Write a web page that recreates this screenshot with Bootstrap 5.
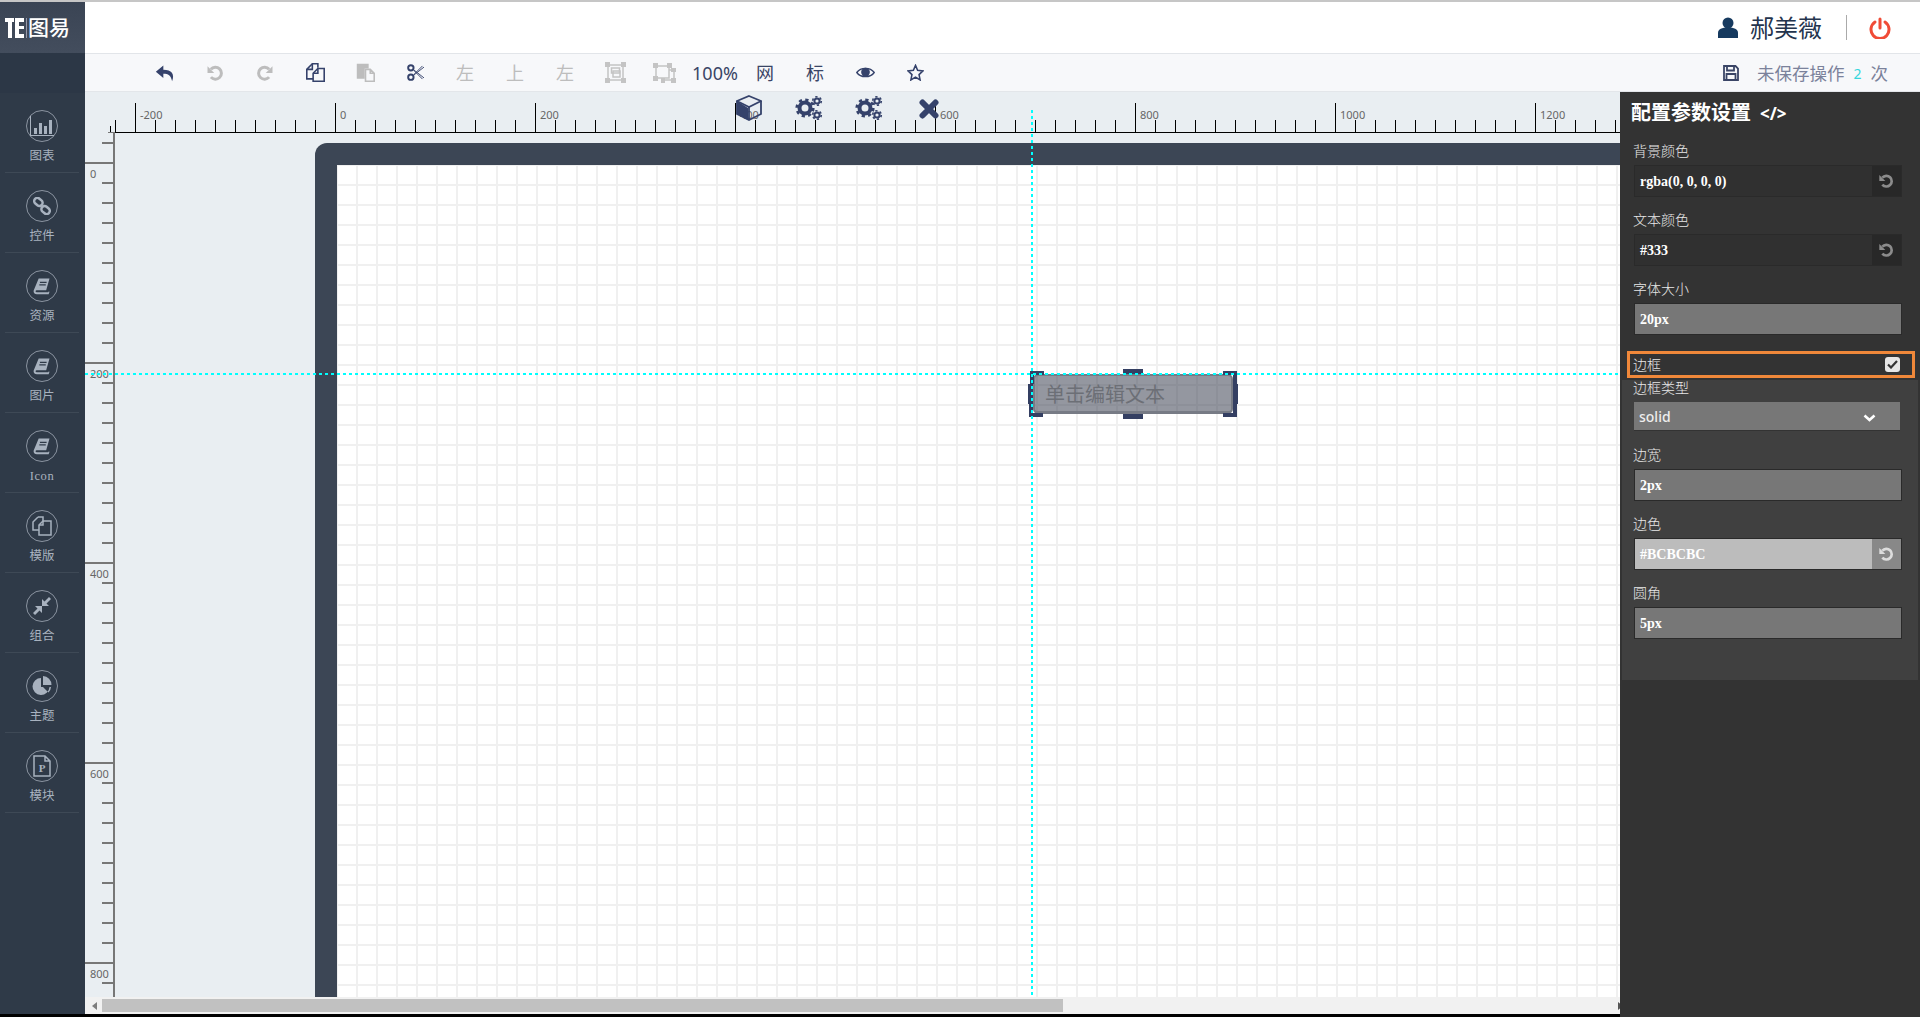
<!DOCTYPE html>
<html lang="zh"><head><meta charset="utf-8"><title>图易</title>
<link rel="stylesheet" href="https://cdn.jsdelivr.net/npm/bootstrap@5.3.0/dist/css/bootstrap.min.css">
<style>
html,body{height:1017px;overflow:hidden;margin:0}
body{background:#000;font-family:"Noto Sans","Noto Sans CJK SC",sans-serif;color:#333}
svg{display:block}
.topline{height:2px;background:#c6c6c6}
.shell{height:1012px;position:relative}
.side{width:85px;background:#2f3a48}
.logo-box{height:51px;background:linear-gradient(#3a4454,#434d5d);color:#fff;font-size:21px;padding-left:5px;font-weight:500}
.logo-bar{width:1px;height:20px;background:#99a;margin:0 1px 0 2px}
.side-gap{height:40px;background:#2c3746}
.nav-cell{height:80px;padding-top:17px;margin:0 6px 0 5px;border-bottom:1px solid #3e4956;color:#a8b2bf;font-size:12.5px;line-height:20px}
.nav-ring{width:32px;height:32px;border:1px solid #8b94a1;border-radius:50%;margin-bottom:4px}
.nav-latin{font-family:"Liberation Serif",serif;letter-spacing:.6px}
.head-row{height:52px;background:#fff;border-bottom:1px solid #e2e5e9}
.user-name{font-size:24px;color:#24344d;line-height:1}
.head-split{width:1px;height:25px;background:#aaa;margin:0 22px 0 24px}
.tool-row{height:38px;background:#f7f8fa;border-bottom:1px solid #e3e6ea;padding-left:55px}
.tool-cell{width:50px;font-size:18px;color:#3a4566;line-height:1}
.tool-cell.off{color:#bdbdbd}
.save-note{color:#7b829b;font-size:17.5px;padding-right:32px;line-height:1}
.save-text{padding-top:2px}
.save-num{color:#35d6dc;font-size:14px;margin:2px 9px 0}
.stage{height:905px;background:#e9eef2;position:relative;overflow:hidden}
.h-ruler{position:absolute;left:25px;top:10px;width:1600px;height:31px;background:
 linear-gradient(#000,#000) 0 bottom/100% 1px no-repeat,
 linear-gradient(90deg,#000 1px,transparent 1px) 25px bottom/200px 30px repeat-x,
 linear-gradient(90deg,#000 1px,transparent 1px) 5px bottom/20px 13px repeat-x,
 linear-gradient(90deg,#000 1px,transparent 1px) 0 bottom/20px 7px no-repeat}
.h-labels{padding:5px 0 0 25px;font-size:11px;color:#666;line-height:16px}
.h-labels span{width:200px;padding-left:5px;flex:none}
.v-ruler{position:absolute;left:0;top:40px;width:30px;height:865px;background:
 linear-gradient(#777,#777) 28px 0/2px 100% no-repeat,
 linear-gradient(#777 2px,transparent 2px) 0 30px/30px 200px repeat-y,
 linear-gradient(#777 2px,transparent 2px) 17px 10px/12px 20px repeat-y,
 linear-gradient(#777,#777) 23px 0/6px 1px no-repeat}
.v-labels{position:absolute;left:5px;top:74px;font-size:11px;color:#666;line-height:16px}
.v-labels span{display:block;height:200px}
.frame{position:absolute;left:230px;top:51px;width:1700px;height:900px;background:#3c4655;border-top-left-radius:12px;padding:22px 0 0 22px}
.sheet{height:100%;background:linear-gradient(90deg,#f0f0f0 2px,transparent 2px) 19px 0/20px 20px,linear-gradient(#f0f0f0 2px,transparent 2px) 0 19px/20px 20px,#fff}
.guide-v{position:absolute;left:946px;top:18px;width:2px;height:890px;background:repeating-linear-gradient(#0ff 0 3px,transparent 3px 6px)}
.guide-h{position:absolute;left:0;top:281px;width:1540px;height:2px;background:repeating-linear-gradient(90deg,#0ff 0 3px,transparent 3px 6px)}
.picked{position:absolute;left:948px;top:282px;width:200px;height:40px;background:rgba(60,66,82,.55);border:2px solid #777b85;border-bottom-width:3px;border-radius:5px;color:#6c6f76;font-size:20px;line-height:1;padding:3px 0 0 10px}
.grip{position:absolute;background:#343f62}
.grip-n{left:88px;top:-7px;width:20px;height:5px}
.grip-s{left:88px;top:38px;width:20px;height:5px}
.grip-w{left:-7px;top:8px;width:5px;height:20px}
.grip-e{right:-7px;top:8px;width:5px;height:20px}
.corner{position:absolute;width:14px;height:13px;border:0 solid #343f62}
.c-tl{left:-5px;top:-5px;border-width:4px 0 0 4px}
.c-tr{right:-6px;top:-5px;border-width:4px 4px 0 0}
.c-bl{left:-6px;bottom:-6px;border-width:0 0 4px 4px}
.c-br{right:-6px;bottom:-6px;border-width:0 4px 4px 0}
.float-tools{position:absolute;left:634px;top:3px;z-index:2}
.float-tools div{width:60px}
.scroll-row{height:17px;background:#f1f1f1;padding-left:7px}
.scroll-thumb{width:961px;height:13px;background:#c1c1c1}
.arrow-l{width:0;height:0;border:4px solid transparent;border-right:5px solid #7d7d7d;border-left:0;margin-right:5px}
.arrow-r{width:0;height:0;border:4px solid transparent;border-left:5px solid #555;border-right:0;margin:0 297px 0 auto}
.panel{position:absolute;right:0;top:90px;width:300px;height:925px;background:#333;color:#e8e8e8;z-index:3}
.panel-title{font:700 20px/24px "Liberation Serif","Noto Sans CJK SC",serif;color:#fff;padding:9px 0 0 11px;height:49px}
.title-code{font:700 17px/24px "Noto Sans",sans-serif;margin-left:9px}
.field{padding:0 18px 0 14px;margin-bottom:13px}
.field-label{font-size:14px;line-height:20px;margin:0 0 4px -1px;color:#e8e8e8;font-weight:300}
.val{font:700 14px/32px "Liberation Serif",serif;height:32px;padding:0 0 0 5px;border:1px solid #2a2a2a;border-radius:0;color:#fff;background:#777;flex:1}
.input-group .val{border-right:0}
.val-dark{background:#303030}
.val-light{background:#bcbcbc}
.undo-dark{width:31px;height:32px;background:#282828;border:1px solid #2a2a2a;border-left:0;border-radius:0;padding:0}
.undo-light{background:#888}
.border-row{margin:16px 5px 2px 7px;height:27px;border:3px solid #f0883a;padding:0 12px 0 3px;font-size:14px;font-weight:300}
.tick-box{width:15px;height:15px;background:#e6e6e6;border-radius:3px}
.group-box{margin:0 2px;height:300px;background:#404040}
.group-box .field{padding:0 16px 0 12px}
.first-label{line-height:16px;margin-bottom:6px}
.select-box{height:29px;background:#777;color:#eee;font-size:14px;line-height:28px;padding:1px 24px 0 5px;font-weight:500;border-bottom:1px solid #333;width:266px}
.select-chev{margin-top:3px}
</style></head>
<body>
<svg width="0" height="0" class="position-absolute"><defs>
<symbol id="gears" viewBox="0 0 28 26"><g fill="none" stroke="#35426b"><circle cx="10" cy="13" r="5.500" stroke-width="4"/><circle cx="10" cy="13" r="8.300" stroke-width="2.600" stroke-dasharray="3.26 3.26"/><circle cx="22" cy="6" r="2.600" stroke-width="2"/><circle cx="22" cy="6" r="4.300" stroke-width="1.600" stroke-dasharray="2.250 2.250"/><circle cx="22" cy="20" r="2.600" stroke-width="2"/><circle cx="22" cy="20" r="4.300" stroke-width="1.600" stroke-dasharray="2.250 2.250"/></g></symbol>
<symbol id="book" viewBox="0 0 24 24"><path fill="#a8b2bf" d="M8 3H21L17 17H5.500C4.500 17 4 18 4.500 18.800 5 19.500 6 19.500 6.500 19.500H19.500L20 18.500 21 19 20 22H6C3 22 1.500 20 2 17.500ZM9.500 7V8.500H17.500V7ZM8.800 10V11.500H16.500V10Z"/></symbol>
<symbol id="undo" viewBox="0 0 24 24"><path fill="none" stroke="currentColor" stroke-width="4" d="M6.500 7A8 8 0 1 1 6.500 17.500"/><path fill="currentColor" d="M2 3V12H11Z"/></symbol>
</defs></svg>
<div class="topline"></div>
<div class="shell d-flex">
 <aside class="side flex-shrink-0">
  <div class="logo-box d-flex align-items-center">
   <svg width="19" height="20" viewBox="0 0 19 20"><path fill="#fff" d="M0 0H9V4H7V20H3V4H0ZM10 0H19V4H14V8H19V11H14V16H19V20H10Z"/></svg>
   <span class="logo-bar"></span><span>图易</span>
  </div>
  <div class="side-gap"></div>
  <div class="nav-cell text-center"><div class="nav-ring d-flex align-items-center justify-content-center mx-auto"><svg width="26" height="22" viewBox="0 0 26 22"><path fill="#a8b2bf" d="M1 1H2V20H25V21H1ZM5 13H8V19H5ZM10 8H13V19H10ZM15 11H18V19H15ZM20 5H23V19H20Z"/></svg></div>图表</div>
  <div class="nav-cell text-center"><div class="nav-ring d-flex align-items-center justify-content-center mx-auto"><svg width="18" height="18" viewBox="0 0 20 20"><g fill="none" stroke="#a8b2bf" stroke-width="2.800"><rect x="1" y="2" width="10" height="7" rx="3.500" transform="rotate(40 6 5.500)"/><rect x="9" y="11" width="10" height="7" rx="3.500" transform="rotate(40 14 14.500)"/></g></svg></div>控件</div>
  <div class="nav-cell text-center"><div class="nav-ring d-flex align-items-center justify-content-center mx-auto"><svg width="20" height="20"><use href="#book"/></svg></div>资源</div>
  <div class="nav-cell text-center"><div class="nav-ring d-flex align-items-center justify-content-center mx-auto"><svg width="20" height="20"><use href="#book"/></svg></div>图片</div>
  <div class="nav-cell text-center"><div class="nav-ring d-flex align-items-center justify-content-center mx-auto"><svg width="20" height="20"><use href="#book"/></svg></div><span class="nav-latin">Icon</span></div>
  <div class="nav-cell text-center"><div class="nav-ring d-flex align-items-center justify-content-center mx-auto"><svg width="20" height="20" viewBox="0 0 20 20"><g fill="none" stroke="#a8b2bf" stroke-width="1.500"><path d="M6 1H11V6M6 1L1 6V14H7"/><path d="M11 5H19V19H7V9Z"/><path d="M7 9H11V5"/></g></svg></div>模版</div>
  <div class="nav-cell text-center"><div class="nav-ring d-flex align-items-center justify-content-center mx-auto"><svg width="18" height="18" viewBox="0 0 18 18"><path fill="#a8b2bf" d="M16 0L18 2 13.500 6.500 16 9H9V2L11.500 4.500ZM2 18L0 16 4.500 11.500 2 9H9V16L6.500 13.500Z"/></svg></div>组合</div>
  <div class="nav-cell text-center"><div class="nav-ring d-flex align-items-center justify-content-center mx-auto"><svg width="20" height="20" viewBox="0 0 20 20"><path fill="#a8b2bf" d="M9 2A8.500 8.500 0 1 0 17.500 11H9ZM11 0V9H19.500A9 9 0 0 0 11 0ZM11 11H19A8 8 0 0 1 16.500 16.500Z"/></svg></div>主题</div>
  <div class="nav-cell text-center"><div class="nav-ring d-flex align-items-center justify-content-center mx-auto"><svg width="20" height="22" viewBox="0 0 20 22"><path fill="none" stroke="#a8b2bf" stroke-width="1.500" d="M2 1H13L18 6V21H2ZM13 1V6H18"/><text x="10" y="17" text-anchor="middle" font-family="Liberation Serif" font-weight="700" font-size="11" fill="#a8b2bf">P</text></svg></div>模块</div>
 </aside>
 <main class="flex-grow-1 d-flex flex-column" style="min-width:0">
  <div class="head-row d-flex align-items-center justify-content-end">
   <svg width="20" height="21" viewBox="0 0 20 21" class="me-2"><circle cx="10" cy="6" r="5.500" fill="#163a5f"/><path fill="#163a5f" d="M0 21V16C0 12 4 10.500 10 10.500S20 12 20 16V21Z"/></svg>
   <span class="user-name ms-1">郝美薇</span><span class="head-split"></span>
   <svg width="22" height="22" viewBox="0 0 22 22" class="me-4"><g fill="none" stroke="#f04b37" stroke-width="3" stroke-linecap="round"><path d="M6 5A9 9 0 1 0 16 5"/><path d="M11 2V11"/></g></svg><span style="width:5px"></span>
  </div>
  <div class="tool-row d-flex align-items-center">
   <div class="tool-cell d-flex justify-content-center"><svg width="20" height="20" viewBox="0 0 24 24"><path fill="#35426b" d="M10 3L1 10.500 10 18V13C16 13 19 14.500 20.500 22 24 13 20 8 10 8Z"/></svg></div>
   <div class="tool-cell off d-flex justify-content-center"><svg width="18" height="18"><use href="#undo"/></svg></div>
   <div class="tool-cell off d-flex justify-content-center"><svg width="18" height="18" style="transform:scaleX(-1)"><use href="#undo"/></svg></div>
   <div class="tool-cell d-flex justify-content-center"><svg width="19" height="19" viewBox="0 0 24 24"><g fill="none" stroke="#35426b" stroke-width="2"><path d="M15 6V1H8L1 8V20H9"/><path d="M8 1V8H1"/><path d="M15 7H23V23H9V13Z"/><path d="M15 7V13H9"/></g></svg></div>
   <div class="tool-cell d-flex justify-content-center"><svg width="19" height="19" viewBox="0 0 24 24"><path fill="#bdbdbd" d="M1 1H16V7H11V20H1Z"/><path fill="none" stroke="#bdbdbd" stroke-width="2" d="M12 8H18L23 13V23H12ZM18 8V13H23"/></svg></div>
   <div class="tool-cell d-flex justify-content-center"><svg width="19" height="17" viewBox="0 0 24 22"><g fill="none" stroke="#35426b"><circle cx="6" cy="5" r="3.500" stroke-width="2.500"/><circle cx="6" cy="17" r="3.500" stroke-width="2.500"/><path stroke-width="1.200" d="M9 7L23 18M10 8.500L21 19.500M9 15L23 4M10 13.500L21 2.500"/></g></svg></div>
   <div class="tool-cell off text-center">左</div><div class="tool-cell off text-center">上</div><div class="tool-cell off text-center">左</div>
   <div class="tool-cell d-flex justify-content-center"><svg width="21" height="21" viewBox="0 0 21 21"><g fill="none" stroke="#c4c4c4" stroke-width="1.500"><rect x="3" y="3" width="15" height="15"/><rect x="6.500" y="6" width="8" height="5"/><rect x="8" y="9" width="7" height="6"/></g><path fill="#c4c4c4" d="M0 0H5V5H0ZM16 0H21V5H16ZM0 16H5V21H0ZM16 16H21V21H16Z"/></svg></div>
   <div class="tool-cell d-flex justify-content-center"><svg width="24" height="20" viewBox="0 0 24 20"><g fill="none" stroke="#c4c4c4" stroke-width="1.500"><path d="M3 3H16V15H3ZM16 7H21V17H10"/></g><path fill="#c4c4c4" d="M0 0H5V5H0ZM14 0H19V5H14ZM0 13H5V18H0ZM18 5H23V9H18ZM18 15H23V20H18ZM8 15H12V20H8Z"/></svg></div>
   <div class="tool-cell text-center">100%</div><div class="tool-cell text-center">网</div><div class="tool-cell text-center">标</div>
   <div class="tool-cell d-flex justify-content-center"><svg width="19" height="13" viewBox="0 0 24 16"><path fill="none" stroke="#35426b" stroke-width="1.800" d="M1 8C6 1 18 1 23 8 18 15 6 15 1 8Z"/><circle cx="12" cy="7.500" r="5.500" fill="#35426b"/></svg></div>
   <div class="tool-cell d-flex justify-content-center"><svg width="17" height="17" viewBox="0 0 24 24"><path fill="none" stroke="#35426b" stroke-width="2.200" d="M12 2L15 9 22.500 9.700 17 15 18.500 22.500 12 18.500 5.500 22.500 7 15 1.500 9.700 9 9Z"/></svg></div>
   <div class="save-note ms-auto d-flex align-items-center"><svg width="16" height="16" viewBox="0 0 16 16" style="margin-right:18px"><path fill="none" stroke="#3a4566" stroke-width="1.800" d="M1 1H12.500L15 3.500V15H1ZM4 1V5.500H11V1M3.500 15V9H12.500V15"/></svg><span class="save-text">未保存操作</span><span class="save-num">2</span><span class="save-text">次</span></div>
  </div>
  <div class="stage">
   <div class="frame"><div class="sheet"></div></div>
   <div class="h-ruler"><div class="h-labels d-flex"><span>-200</span><span>0</span><span>200</span><span>400</span><span>600</span><span>800</span><span>1000</span><span>1200</span></div></div>
   <div class="v-ruler"></div>
   <div class="v-labels"><span>0</span><span>200</span><span>400</span><span>600</span><span>800</span></div>
   <div class="float-tools d-flex">
    <div class="d-flex justify-content-center"><svg width="26" height="26" viewBox="0 0 26 26"><path fill="#35426b" d="M1 6L12 13V25L1 19Z"/><path fill="#e9eef2" fill-opacity=".7" stroke="#35426b" stroke-width="1.800" d="M13 1L25 6 13 12 1 6Z"/><path fill="none" stroke="#35426b" stroke-width="1.800" d="M25 6V19L13 25 1 19V6M13 12V25"/></svg></div>
    <div class="d-flex justify-content-center"><svg width="28" height="26"><use href="#gears"/></svg></div>
    <div class="d-flex justify-content-center"><svg width="28" height="26"><use href="#gears"/></svg></div>
    <div class="d-flex justify-content-center"><svg width="20" height="20" viewBox="0 0 20 20" class="mt-1"><path stroke="#35426b" stroke-width="6" stroke-linecap="round" d="M3.500 3.500L16.500 16.500M16.500 3.500L3.500 16.500"/></svg></div>
   </div>
   <div class="picked d-flex align-items-center"><span>单击编辑文本</span><i class="grip grip-n"></i><i class="grip grip-s"></i><i class="grip grip-w"></i><i class="grip grip-e"></i><i class="corner c-tl"></i><i class="corner c-tr"></i><i class="corner c-bl"></i><i class="corner c-br"></i></div>
   <div class="guide-v"></div><div class="guide-h"></div>
  </div>
  <div class="scroll-row d-flex align-items-center"><span class="arrow-l"></span><div class="scroll-thumb"></div><span class="arrow-r"></span></div>
 </main>
 <section class="panel">
  <div class="panel-title">配置参数设置<span class="title-code">&lt;/&gt;</span></div>
  <div class="field"><div class="field-label">背景颜色</div><div class="input-group flex-nowrap"><div class="form-control val val-dark">rgba(0, 0, 0, 0)</div><span class="undo-dark input-group-text justify-content-center"><svg width="16" height="16" color="#8c8c8c"><use href="#undo"/></svg></span></div></div>
  <div class="field"><div class="field-label">文本颜色</div><div class="input-group flex-nowrap"><div class="form-control val val-dark">#333</div><span class="undo-dark input-group-text justify-content-center"><svg width="16" height="16" color="#8c8c8c"><use href="#undo"/></svg></span></div></div>
  <div class="field mb-0"><div class="field-label">字体大小</div><div class="form-control val">20px</div></div>
  <div class="border-row d-flex align-items-center justify-content-between"><span>边框</span><span class="tick-box d-flex align-items-center justify-content-center"><svg width="11" height="9" viewBox="0 0 11 9"><path fill="none" stroke="#333" stroke-width="2.200" d="M1 4.500L4 7.500 10 1"/></svg></span></div>
  <div class="group-box">
   <div class="field" style="margin-bottom:14px"><div class="field-label first-label">边框类型</div><div class="select-box d-flex align-items-center justify-content-between"><span>solid</span><svg width="13" height="8" viewBox="0 0 13 8" class="select-chev"><path fill="none" stroke="#fff" stroke-width="2.600" d="M1.500 1.500L6.500 6 11.500 1.500"/></svg></div></div>
   <div class="field"><div class="field-label">边宽</div><div class="form-control val">2px</div></div>
   <div class="field"><div class="field-label">边色</div><div class="input-group flex-nowrap"><div class="form-control val val-light">#BCBCBC</div><span class="undo-dark undo-light input-group-text justify-content-center"><svg width="16" height="16" color="#ddd"><use href="#undo"/></svg></span></div></div>
   <div class="field"><div class="field-label">圆角</div><div class="form-control val">5px</div></div>
  </div>
 </section>
</div>
</body></html>
